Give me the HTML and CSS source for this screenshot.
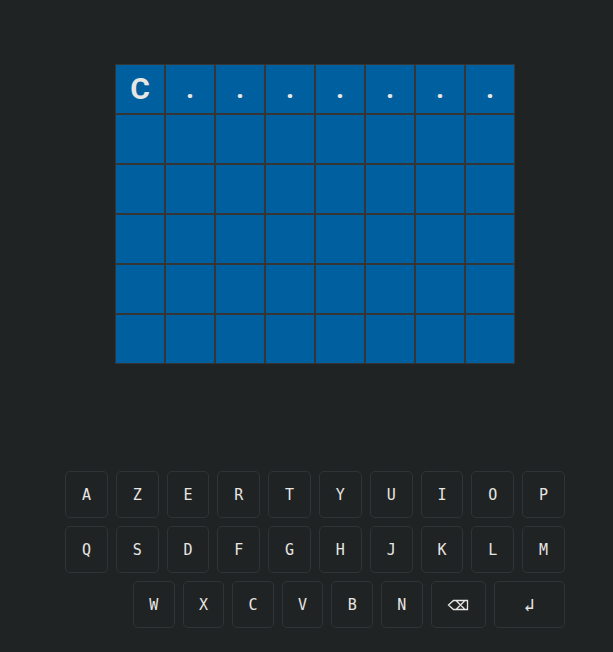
FILE: index.html
```html
<!DOCTYPE html>
<html>
<head>
<meta charset="utf-8">
<link rel="stylesheet" href="styles.css">
</head>
<body>
<div class="app">
  <div class="board">
    <div class="cell big">C</div><div class="cell">.</div><div class="cell">.</div><div class="cell">.</div><div class="cell">.</div><div class="cell">.</div><div class="cell">.</div><div class="cell">.</div>
    <div class="cell"></div><div class="cell"></div><div class="cell"></div><div class="cell"></div><div class="cell"></div><div class="cell"></div><div class="cell"></div><div class="cell"></div>
    <div class="cell"></div><div class="cell"></div><div class="cell"></div><div class="cell"></div><div class="cell"></div><div class="cell"></div><div class="cell"></div><div class="cell"></div>
    <div class="cell"></div><div class="cell"></div><div class="cell"></div><div class="cell"></div><div class="cell"></div><div class="cell"></div><div class="cell"></div><div class="cell"></div>
    <div class="cell"></div><div class="cell"></div><div class="cell"></div><div class="cell"></div><div class="cell"></div><div class="cell"></div><div class="cell"></div><div class="cell"></div>
    <div class="cell"></div><div class="cell"></div><div class="cell"></div><div class="cell"></div><div class="cell"></div><div class="cell"></div><div class="cell"></div><div class="cell"></div>
  </div>
  <div class="keyboard">
    <div class="row">
      <div class="key">A</div><div class="key">Z</div><div class="key">E</div><div class="key">R</div><div class="key">T</div><div class="key">Y</div><div class="key">U</div><div class="key">I</div><div class="key">O</div><div class="key">P</div>
    </div>
    <div class="row">
      <div class="key">Q</div><div class="key">S</div><div class="key">D</div><div class="key">F</div><div class="key">G</div><div class="key">H</div><div class="key">J</div><div class="key">K</div><div class="key">L</div><div class="key">M</div>
    </div>
    <div class="row last">
      <div class="key">W</div><div class="key">X</div><div class="key">C</div><div class="key">V</div><div class="key">B</div><div class="key">N</div>
      <div class="key back"><svg class="icon-back" width="22" height="12" viewBox="0 0 22 12"><path d="M6.5 1.5 H20.5 V10.5 H6.5 L1.5 6 Z M9.5 2 L17.5 10 M17.5 2 L9.5 10" fill="none" stroke="#e8e6e3" stroke-width="1.3" stroke-linejoin="miter"/></svg></div>
      <div class="key enter">↲</div>
    </div>
  </div>
</div>
</body>
</html>
```
FILE: styles.css
```css
html, body {
  margin: 0;
  padding: 0;
  background: #202324;
  color: #e8e6e3;
}
.app {
  width: 500px;
  margin-left: 65px;
  padding-top: 64px;
  display: flex;
  flex-direction: column;
}
.board {
  margin-left: 50px;
  width: 400px;
  display: grid;
  grid-template-columns: repeat(8, 50px);
  grid-auto-rows: 50px;
}
.cell {
  box-sizing: border-box;
  border: 1px solid #353535;
  background: #00609f;
  display: flex;
  align-items: center;
  justify-content: center;
  font-family: Roboto, "Noto Sans", sans-serif;
  font-weight: 700;
  font-size: 28px;
  color: #e8e6e3;
  line-height: 1;
}
.cell.big {
  font-weight: 700;
  font-size: 30px;
}
.keyboard {
  margin-top: 107px;
  display: flex;
  flex-direction: column;
  gap: 8px;
}
.row {
  display: flex;
  gap: 8px;
}
.row.last {
  margin-left: 68px;
}
.key {
  box-sizing: border-box;
  flex: 1 1 0;
  height: 47px;
  border: 1px solid #303436;
  border-radius: 5px;
  display: flex;
  align-items: center;
  justify-content: center;
  font-family: "DejaVu Sans Mono", monospace;
  font-size: 15px;
  color: #e8e6e3;
}
.row.last .key {
  flex: 0 0 41.6px;
}
.row.last .key.back {
  flex: 0 0 55px;
}
.row.last .key.enter {
  flex: 0 0 71.4px;
  font-size: 18px;
}
.icon-back {
  display: block;
}
```
